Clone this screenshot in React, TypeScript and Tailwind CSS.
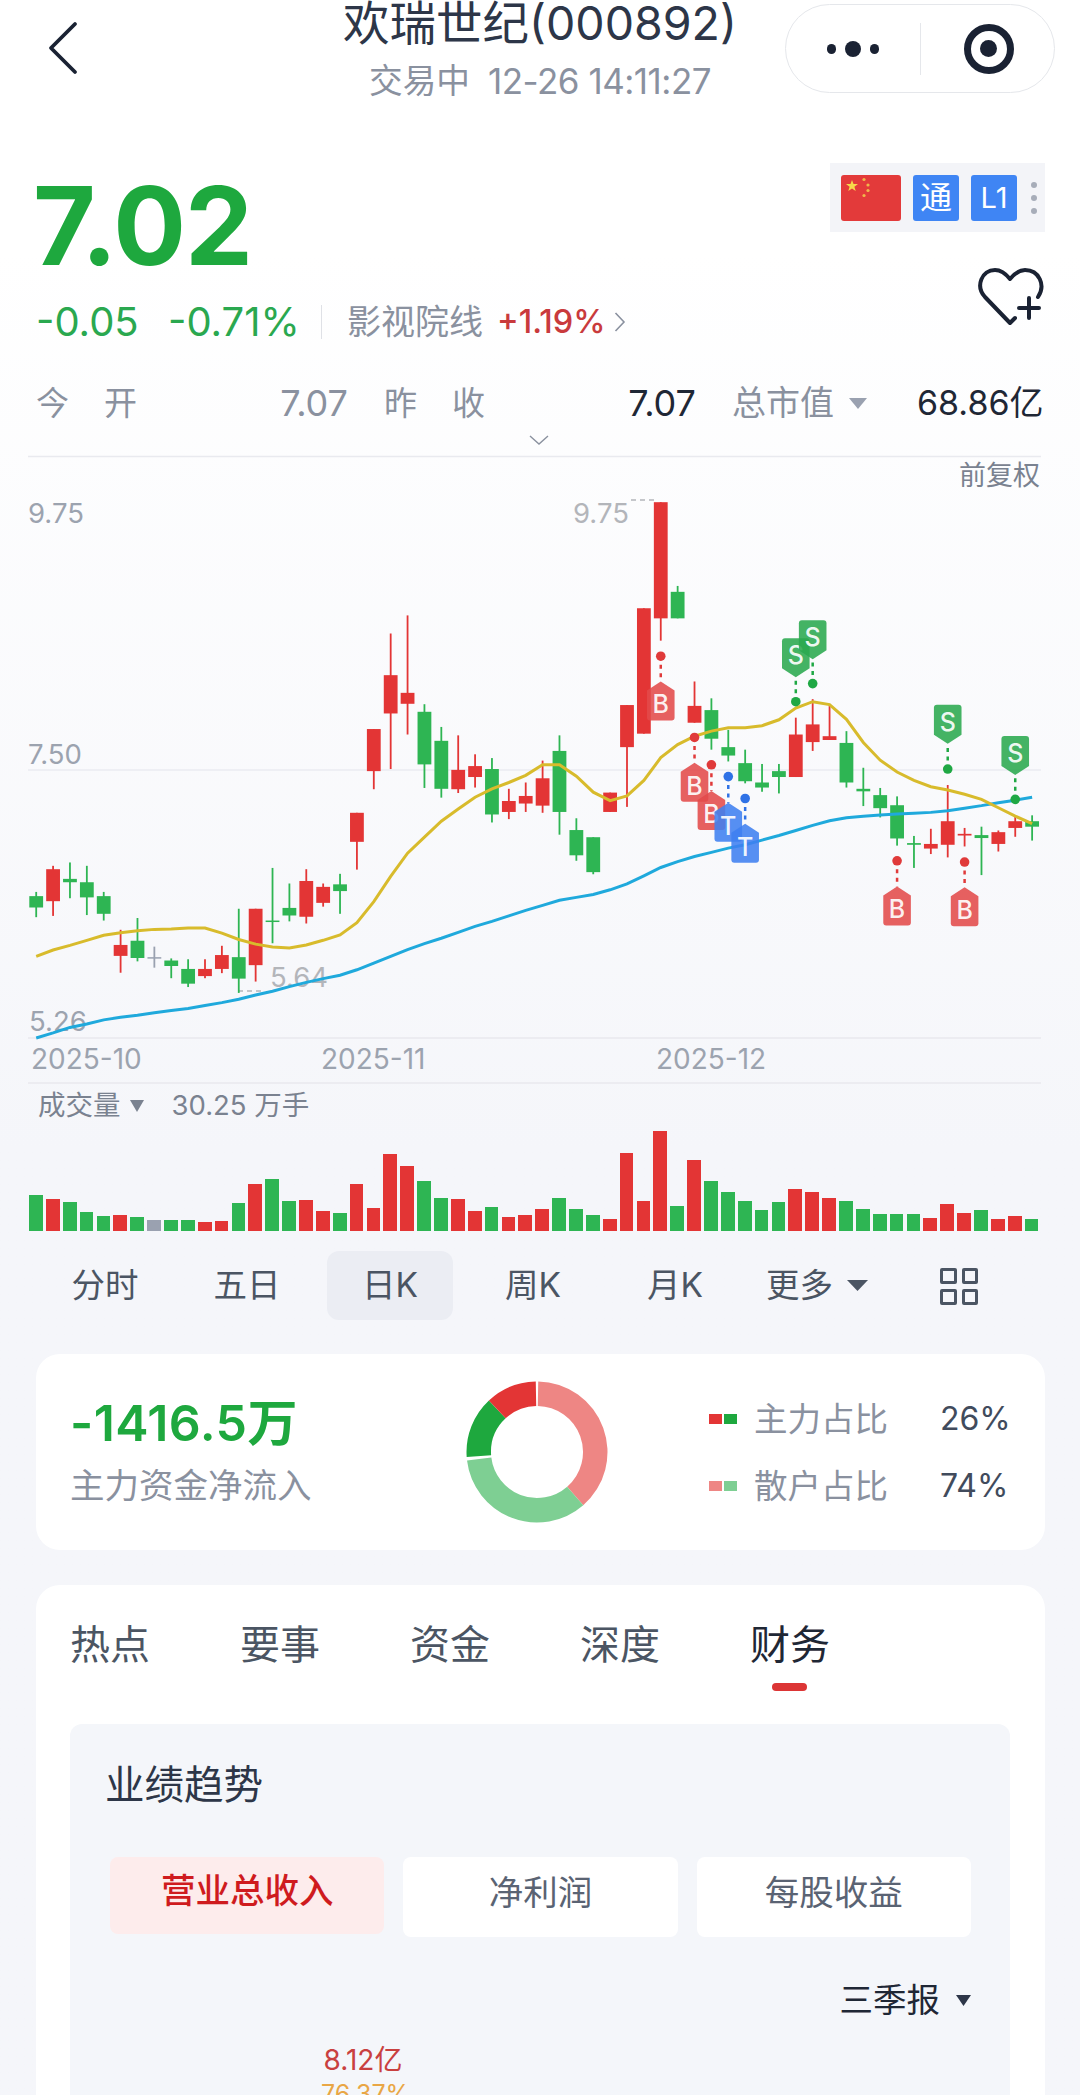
import { ChevronLeft } from 'lucide-react';

const px = (i: number) => 36.2 + 16.88 * i;
const py = (v: number) => v / 2.376;

type Candle = [string, number, number, number, number];

const candles: Candle[] = [
  ['g', 1050, 1060, 1087, 1110], ['r', 988, 996, 1072, 1107], ['g', 980, 1019, 1027, 1065], ['g', 988, 1027, 1063, 1105],
  ['g', 1050, 1060, 1102, 1118], ['r', 1140, 1176, 1202, 1242], ['g', 1112, 1166, 1207, 1215], ['n', 1180, 1205, 1208, 1230],
  ['g', 1208, 1213, 1226, 1255], ['g', 1210, 1233, 1268, 1276], ['r', 1210, 1233, 1250, 1255], ['r', 1178, 1200, 1233, 1243],
  ['g', 1090, 1205, 1256, 1290], ['r', 1090, 1090, 1224, 1263], ['g', 993, 1118, 1121, 1172], ['g', 1030, 1088, 1106, 1120],
  ['r', 996, 1024, 1109, 1125], ['r', 1030, 1038, 1076, 1085], ['g', 1007, 1032, 1048, 1102], ['r', 862, 862, 931, 997],
  ['r', 663, 663, 763, 806], ['r', 436, 535, 626, 758], ['r', 393, 577, 603, 676], ['g', 604, 622, 747, 803],
  ['g', 658, 691, 805, 826], ['r', 678, 760, 806, 815], ['r', 723, 751, 777, 802], ['g', 732, 758, 866, 885],
  ['r', 805, 834, 860, 877], ['r', 790, 822, 840, 860], ['r', 738, 780, 845, 862], ['g', 678, 715, 860, 914],
  ['g', 875, 903, 963, 976], ['g', 920, 920, 1003, 1008], ['r', 814, 814, 860, 860], ['r', 606, 606, 706, 848],
  ['r', 376, 376, 674, 674], ['r', 124, 124, 400, 453], ['g', 323, 337, 400, 400], ['r', 550, 608, 648, 648],
  ['g', 590, 618, 686, 712], ['g', 665, 706, 726, 740], ['g', 712, 744, 787, 792], ['g', 746, 790, 802, 812],
  ['g', 746, 763, 777, 816], ['r', 636, 676, 777, 777], ['r', 592, 652, 694, 715], ['r', 606, 680, 689, 689],
  ['g', 668, 696, 790, 802], ['g', 755, 805, 811, 846], ['g', 803, 820, 851, 873], ['g', 823, 844, 923, 940],
  ['g', 917, 934, 938, 993], ['r', 900, 936, 947, 960], ['r', 796, 882, 938, 968], ['r', 898, 912, 916, 942],
  ['g', 895, 915, 922, 1010], ['r', 904, 908, 936, 954], ['r', 872, 882, 898, 919], ['g', 868, 882, 895, 928],
];

const ma5 = [
  1203, 1188, 1177, 1165, 1153, 1147, 1142, 1139, 1138, 1136, 1136, 1148, 1163, 1174, 1181, 1183, 1176, 1165, 1152, 1123,
  1073, 1013, 958, 920, 882, 853, 825, 805, 790, 773, 748, 748, 775, 813, 833, 822, 785, 731, 700, 680,
  668, 660, 660, 655, 641, 613, 598, 605, 640, 695, 737, 765, 785, 800, 808, 818, 830, 850, 870, 888,
];

const ma20 = [
  1397, 1385, 1372, 1364, 1354, 1348, 1343, 1337, 1332, 1327, 1320, 1313, 1305, 1295, 1286, 1275, 1265, 1256, 1248, 1235,
  1219, 1203, 1187, 1173, 1160, 1146, 1132, 1120, 1107, 1094, 1082, 1070, 1063, 1056, 1045, 1031, 1012, 992, 978, 966,
  956, 946, 938, 927, 916, 904, 892, 881, 874, 870, 867, 865, 863, 861, 857, 851, 845, 838, 832, 825,
];

// kind, candle index, dot y, tag edge y
const marks: [string, number, number, number][] = [
  ['B', 37, 490, 550], ['B', 39, 683, 743], ['B', 40, 748, 810], ['T', 41, 776, 838], ['T', 42, 828, 888],
  ['S', 45, 598, 540], ['S', 46, 555, 497], ['S', 54, 758, 698], ['S', 58, 830, 772], ['B', 51, 976, 1037], ['B', 55, 979, 1039],
];

const volumes: [string, number][] = [
  ['g', 312], ['r', 324], ['g', 333], ['g', 363], ['g', 375], ['r', 372], ['g', 378], ['n', 387], ['g', 387], ['g', 387],
  ['r', 393], ['r', 390], ['g', 336], ['r', 279], ['g', 264], ['g', 330], ['r', 327], ['r', 360], ['g', 366], ['r', 279],
  ['r', 351], ['r', 189], ['r', 225], ['g', 270], ['g', 321], ['r', 324], ['r', 360], ['g', 348], ['r', 378], ['r', 372],
  ['r', 354], ['g', 321], ['g', 354], ['g', 372], ['r', 384], ['r', 186], ['r', 330], ['r', 120], ['g', 345], ['r', 207],
  ['g', 270], ['g', 303], ['g', 330], ['g', 357], ['g', 333], ['r', 294], ['r', 303], ['r', 321], ['g', 330], ['g', 354],
  ['g', 369], ['g', 369], ['g', 369], ['r', 381], ['r', 339], ['r', 366], ['g', 357], ['r', 384], ['r', 375], ['g', 384],
];

const candleColor: Record<string, string> = { r: '#e33535', g: '#2eb553', n: '#9aa1b0' };
const markColor: Record<string, string> = { B: '#e34a4a', S: '#2aa84f', T: '#3f80f0' };
const dotColor: Record<string, string> = { B: '#e03a3a', S: '#1fa844', T: '#2f72e6' };

const linePoints = (values: number[]) => values.map((v, i) => `${px(i)},${py(v)}`).join(' ');

const Mark = ({ kind, index, dotY, edgeY }: { kind: string; index: number; dotY: number; edgeY: number }) => {
  const x = px(index);
  const d = py(dotY);
  const e = py(edgeY);
  const w = 13.8;
  const h = 39;
  const path =
    kind === 'S'
      ? `M${x} ${e} L${x + w} ${e - 9} V${e - h + 3} Q${x + w} ${e - h} ${x + w - 3} ${e - h} H${x - w + 3} Q${x - w} ${e - h} ${x - w} ${e - h + 3} V${e - 9} Z`
      : `M${x} ${e} L${x + w} ${e + 9} V${e + h - 3} Q${x + w} ${e + h} ${x + w - 3} ${e + h} H${x - w + 3} Q${x - w} ${e + h} ${x - w} ${e + h - 3} V${e + 9} Z`;
  const textY = kind === 'S' ? e - 13 : e + 32;
  return (
    <g>
      <line x1={x} x2={x} y1={d} y2={e} stroke={dotColor[kind]} strokeWidth="2.5" strokeDasharray="4 4.5" />
      <circle cx={x} cy={d} r="4.8" fill={dotColor[kind]} />
      <path d={path} fill={markColor[kind]} fillOpacity="0.88" />
      <text x={x} y={textY} textAnchor="middle" fontSize="25" fontWeight="500" fill="#fff" fillOpacity="0.92">
        {kind}
      </text>
    </g>
  );
};

const KlineChart = () => (
  <svg width="1080" height="635" viewBox="0 0 1080 635" className="block [font-family:Inter,'Noto_Sans_CJK_SC',sans-serif]">
    <line x1="28" x2="1041" y1="6.5" y2="6.5" stroke="#e9eaef" strokeWidth="1.5" />
    <line x1="28" x2="1041" y1="320" y2="320" stroke="#eeeff4" strokeWidth="2" />
    <line x1="28" x2="1041" y1="588" y2="588" stroke="#e8e9ee" strokeWidth="1.5" />
    <line x1="28" x2="1041" y1="633" y2="633" stroke="#e8e9ee" strokeWidth="1.5" />

    <g fontSize="27.5" fill="#9ca3af">
      <text x="28" y="73">9.75</text>
      <text x="28" y="314">7.50</text>
      <text x="29" y="581">5.26</text>
    </g>
    <g fontSize="28" fill="#9ca3af">
      <text x="31" y="619">2025-10</text>
      <text x="321" y="619">2025-11</text>
      <text x="656" y="619">2025-12</text>
    </g>
    <g fontSize="27.5" fill="#b3b5ba">
      <text x="573" y="73">9.75</text>
      <text x="270" y="537">5.64</text>
    </g>
    <line x1="631" x2="657" y1="50" y2="50" stroke="#b3b5ba" strokeWidth="1.5" strokeDasharray="5 4" />
    <line x1="238" x2="265" y1="541" y2="541" stroke="#b3b5ba" strokeWidth="1.5" strokeDasharray="5 4" />
    <text x="1040" y="35" textAnchor="end" fontSize="27" fill="#7a8290">前复权</text>

    {candles.map(([c, high, top, bottom, low], i) => (
      <g key={i} fill={candleColor[c]}>
        <rect x={px(i) - 0.9} y={py(high)} width="1.8" height={py(low) - py(high)} />
        <rect x={px(i) - 6.9} y={py(top)} width="13.8" height={Math.max(py(bottom) - py(top), 1.5)} />
      </g>
    ))}

    <polyline points={linePoints(ma20)} fill="none" stroke="#1fa9dc" strokeWidth="3" />
    <polyline points={linePoints(ma5)} fill="none" stroke="#d8bb2c" strokeWidth="3" />

    {marks.map(([kind, index, dotY, edgeY]) => (
      <Mark key={index} kind={kind} index={index} dotY={dotY} edgeY={edgeY} />
    ))}
  </svg>
);

const polar = (r: number, deg: number) => {
  const a = (deg * Math.PI) / 180;
  return `${71 + r * Math.sin(a)} ${71 - r * Math.cos(a)}`;
};

const arc = (from: number, to: number) => {
  const large = to - from > 180 ? 1 : 0;
  return `M${polar(70.5, from)} A70.5 70.5 0 ${large} 1 ${polar(70.5, to)} L${polar(46, to)} A46 46 0 ${large} 0 ${polar(46, from)} Z`;
};

const Donut = () => (
  <svg width="142" height="142" viewBox="0 0 142 142">
    <path d={arc(1, 139)} fill="#ee8684" />
    <path d={arc(139, 263)} fill="#7ecf93" />
    <path d={arc(266, 317)} fill="#1ea83e" />
    <path d={arc(317, 359)} fill="#e33535" />
  </svg>
);

const Triangle = ({ className }: { className: string }) => (
  <svg viewBox="0 0 10 8" preserveAspectRatio="none" className={className}>
    <path d="M0 0 H10 L5 8 Z" fill="currentColor" />
  </svg>
);

const Flag = () => (
  <svg viewBox="0 0 60 46" className="w-[60px] h-[46px] rounded-[3px]">
    <rect width="60" height="46" fill="#e33a3a" />
    <path d="M11 5 L12.5 9 H17 L13.4 11.8 L14.7 16 L11 13.4 L7.3 16 L8.6 11.8 L5 9 H9.5 Z" fill="#f7d84a" />
    <circle cx="23" cy="4.5" r="1.6" fill="#f0b84a" />
    <circle cx="27" cy="10" r="1.6" fill="#f0b84a" />
    <circle cx="27" cy="15.5" r="1.6" fill="#f0b84a" />
    <circle cx="23" cy="20.5" r="1.6" fill="#f0b84a" />
  </svg>
);

const Stat = ({ label, value, valueClass }: { label: string[]; value: string; valueClass: string }) => (
  <div className="flex items-center justify-between w-[312px]">
    <div className="flex text-[#8a919f] gap-[35px]">
      {label.map((t) => (
        <span key={t}>{t}</span>
      ))}
    </div>
    <span className={valueClass}>{value}</span>
  </div>
);

export default function App() {
  return (
    <div className="w-[1080px] h-[2095px] overflow-hidden bg-gradient-to-b from-white from-[12%] to-[#f5f6fa] to-[55%] text-[#2d3648] [font-family:Inter,'Noto_Sans_CJK_SC',sans-serif]">
      <header className="relative h-[163px]">
        <div className="flex flex-col items-center">
          <h1 className="text-[46.5px] leading-[46px] font-normal">欢瑞世纪(000892)</h1>
          <div className="mt-[12px] flex gap-[18px] text-[33.7px] leading-[46px] text-[#8a919f]">
            <span>交易中</span>
            <span className="text-[35px] tracking-[-0.5px]">12-26 14:11:27</span>
          </div>
        </div>
        <ChevronLeft className="absolute left-[15px] top-0 w-[96px] h-[96px] text-[#1a2233]" strokeWidth={0.95} />
        <div className="absolute left-[785px] top-[4px] w-[270px] h-[89px] rounded-full border border-[#e5e7eb] flex items-center bg-white">
          <div className="w-[134px] flex items-center justify-center gap-[9px]">
            <span className="w-[9px] h-[10px] rounded-full bg-[#1a2233]" />
            <span className="w-[16px] h-[16px] rounded-full bg-[#1a2233]" />
            <span className="w-[9px] h-[10px] rounded-full bg-[#1a2233]" />
          </div>
          <div className="w-px h-[52px] bg-[#e5e7eb]" />
          <div className="flex-1 flex items-center justify-center pl-[2px]">
            <div className="w-[50px] h-[50px] rounded-full border-[7px] border-[#1a2233] flex items-center justify-center">
              <span className="w-[17px] h-[17px] rounded-full bg-[#1a2233]" />
            </div>
          </div>
        </div>
      </header>

      <section className="flex justify-between pl-[36px] pr-[35px] h-[178px]">
        <div>
          <div className="text-[108px] leading-[104px] font-bold text-[#1ea83e] mt-[11px] -ml-[3px] tracking-[-1px]">7.02</div>
          <div className="flex items-center mt-[22px] text-[40px] leading-[44px] text-[#2aa84f]">
            <span className="w-[132px]">-0.05</span>
            <span className="w-[153px]">-0.71%</span>
            <div className="w-px h-[34px] bg-[#dfe1e6]" />
            <span className="ml-[25px] text-[34px] text-[#8a919f]">影视院线</span>
            <span className="ml-[14px] text-[32.5px] text-[#c93a3c] font-medium">+1.19%</span>
            <svg viewBox="0 0 12 20" className="ml-[9px] w-[12px] h-[20px] text-[#8a919f]">
              <path d="M1.5 1 L10 10 L1.5 19" fill="none" stroke="currentColor" strokeWidth="1.6" />
            </svg>
          </div>
        </div>
        <div className="flex flex-col items-end">
          <div className="w-[215px] h-[69px] bg-[#f3f4f8] flex items-center pl-[11px] gap-[12px]">
            <Flag />
            <span className="w-[46px] h-[46px] rounded-[3px] bg-[#3f85f4] text-white text-[32px] leading-[46px] text-center">通</span>
            <span className="w-[46px] h-[46px] rounded-[3px] bg-[#3f85f4] text-white text-[29px] leading-[46px] text-center">L1</span>
            <div className="flex flex-col gap-[7px] ml-[2px]">
              <span className="w-[6px] h-[6px] rounded-full bg-[#a7adb9]" />
              <span className="w-[6px] h-[6px] rounded-full bg-[#a7adb9]" />
              <span className="w-[6px] h-[6px] rounded-full bg-[#a7adb9]" />
            </div>
          </div>
          <svg viewBox="0 0 64 58" className="mt-[36px] mr-[2px] w-[64px] h-[58px] overflow-visible text-[#1a2233]" fill="none" stroke="currentColor" strokeWidth="4" strokeLinecap="round" strokeLinejoin="round">
            <path d="M36 50 L31 55 L6 29 C-4 18 3 2 16 2 C23 2 27 6 31 11 C35 6 39 2 46 2 C60 2 67 17 59 29" />
            <path d="M50 30 V50 M40 40 H60" />
          </svg>
        </div>
      </section>

      <section className="flex items-center mt-[39px] pl-[36px] text-[33px] leading-[46px]">
        <Stat label={['今', '开']} value="7.07" valueClass="text-[#8a919f] text-[36px]" />
        <div className="ml-[36px]">
          <Stat label={['昨', '收']} value="7.07" valueClass="text-[#1f2735] text-[36px]" />
        </div>
        <div className="flex items-center ml-[36px] text-[34px] text-[#8a919f]">
          总市值
          <Triangle className="ml-[15px] w-[18px] h-[11px] text-[#9aa1b0]" />
        </div>
        <span className="ml-[50px] text-[34px] text-[#1f2735]">68.86亿</span>
      </section>

      <svg viewBox="0 0 20 10" className="block mx-auto mt-[9px] w-[20px] h-[10px] -translate-x-[1px] text-[#8a919f]">
        <path d="M1 1 L10 9 L19 1" fill="none" stroke="currentColor" strokeWidth="1.4" />
      </svg>

      <div className="mt-[5px] h-[635px]">
        <KlineChart />
      </div>

      <div className="flex items-center pl-[38px] h-[30px] mt-[6px] text-[27.5px] text-[#7a8290]">
        成交量
        <Triangle className="ml-[9px] w-[14px] h-[12px] text-[#7a8290]" />
        <span className="ml-[28px]">30.25 万手</span>
      </div>

      <div className="flex items-end pl-[29px] gap-[3.08px] h-[101px] mt-[9px]">
        {volumes.map(([c, top], i) => (
          <div
            key={i}
            className={`w-[13.8px] ${c === 'r' ? 'bg-[#e33535]' : c === 'g' ? 'bg-[#2eb553]' : 'bg-[#9aa1b0]'}`}
            style={{ height: (420 - top) / 3 }}
          />
        ))}
      </div>

      <nav className="flex items-center pl-[34px] mt-[20px] h-[69px] text-[33.5px] text-[#4b5563]">
        <div className="w-[142px] text-center">分时</div>
        <div className="w-[142px] text-center">五日</div>
        <div className="w-[126px] mx-[9px] h-[69px] leading-[69px] rounded-[12px] bg-[#ebedf3] text-center">日K</div>
        <div className="w-[142px] text-center">周K</div>
        <div className="w-[142px] text-center">月K</div>
        <div className="w-[142px] flex items-center justify-center">
          更多
          <Triangle className="ml-[14px] w-[21px] h-[11px] text-[#4b5563]" />
        </div>
        <div className="w-[142px] flex justify-center pt-[2px]">
          <div className="grid grid-cols-2 gap-[5px] w-[38px]">
            <span className="h-[16px] border-[3px] border-[#4b5563] rounded-[2px]" />
            <span className="h-[16px] border-[3px] border-[#4b5563] rounded-[2px]" />
            <span className="h-[16px] border-[3px] border-[#4b5563] rounded-[2px]" />
            <span className="h-[16px] border-[3px] border-[#4b5563] rounded-[2px]" />
          </div>
        </div>
      </nav>

      <section className="mx-[36px] mt-[34px] h-[196px] w-[1009px] rounded-[24px] bg-white flex items-center pl-[34px]">
        <div className="w-[396px]">
          <div className="text-[50px] leading-[52px] font-semibold text-[#1ea83e] tracking-[0.4px]">-1416.5万</div>
          <div className="mt-[15px] text-[34.5px] leading-[44px] text-[#8a919f]">主力资金净流入</div>
        </div>
        <Donut />
        <div className="ml-[101px] flex flex-col gap-[21px] w-[336px] text-[33.5px] leading-[46px] whitespace-nowrap">
          <div className="flex items-center">
            <span className="w-[13px] h-[10px] bg-[#e33535]" />
            <span className="ml-[2px] w-[13px] h-[10px] bg-[#1ea83e]" />
            <span className="ml-[17px] text-[#8a919f]">主力占比</span>
            <span className="ml-[52px] text-[32px] text-[#414b5c]">26%</span>
          </div>
          <div className="flex items-center">
            <span className="w-[13px] h-[10px] bg-[#ee8684]" />
            <span className="ml-[2px] w-[13px] h-[10px] bg-[#7ecf93]" />
            <span className="ml-[17px] text-[#8a919f]">散户占比</span>
            <span className="ml-[52px] text-[32px] text-[#414b5c]">74%</span>
          </div>
        </div>
      </section>

      <section className="mx-[36px] mt-[35px] w-[1009px] h-[600px] rounded-t-[24px] bg-white pt-[36px] px-[34px]">
        <div className="flex gap-[90px] text-[40px] leading-[48px] text-[#4b5563]">
          <span className="w-[80px]">热点</span>
          <span className="w-[80px]">要事</span>
          <span className="w-[80px]">资金</span>
          <span className="w-[80px]">深度</span>
          <div className="w-[80px] relative text-[#1f2735]">
            财务
            <span className="absolute left-[22px] top-[62px] w-[35px] h-[8px] rounded-full bg-[#dc3535]" />
          </div>
        </div>
        <div className="mt-[55px] w-[940px] h-[400px] rounded-[12px] bg-[#f4f6fa] pt-[37px] pl-[35px] pr-[39px]">
          <h2 className="text-[39.5px] leading-[48px] font-normal text-[#2d3648]">业绩趋势</h2>
          <div className="grid grid-cols-3 gap-[19px] mt-[48px] ml-[5px] items-start text-[34.5px] text-[#5a6373]">
            <div className="h-[77px] leading-[68px] rounded-[8px] bg-[#fdecec] text-center text-[#cf1b1e] font-medium">营业总收入</div>
            <div className="h-[80px] leading-[72px] rounded-[8px] bg-white text-center">净利润</div>
            <div className="h-[80px] leading-[72px] rounded-[8px] bg-white text-center">每股收益</div>
          </div>
          <div className="flex items-center justify-end mt-[40px] text-[33.5px] leading-[46px] text-[#1f2735]">
            三季报
            <Triangle className="ml-[16px] w-[15px] h-[11px] text-[#2d3648]" />
          </div>
          <div className="ml-[216px] mt-[20px] w-[84px] text-center">
            <div className="text-[28px] leading-[34px] text-[#c9403f] whitespace-nowrap">8.12亿</div>
            <div className="text-[25px] leading-[34px] text-[#e9a645] whitespace-nowrap">76.37%</div>
          </div>
        </div>
      </section>
    </div>
  );
}
